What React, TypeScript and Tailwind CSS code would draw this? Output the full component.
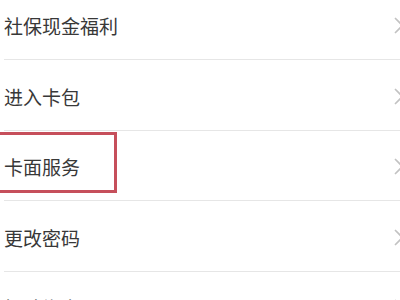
import React from "react";

const items = ["社保现金福利", "进入卡包", "卡面服务", "更改密码", "解除绑定"];

function Chevron() {
  return (
    <svg width="10" height="17" viewBox="0 0 10 17" className="-mr-[4px] shrink-0">
      <polyline points="1.5,1.5 8.5,8.5 1.5,15.5" fill="none" stroke="#c2c2c2" strokeWidth="1.7" strokeLinecap="round" strokeLinejoin="round" />
    </svg>
  );
}

export default function App() {
  return (
    <div className="relative w-[400px] h-[300px] overflow-hidden bg-white" style={{ fontFamily: '"Noto Sans CJK SC", "Noto Sans", sans-serif' }}>
      <div className="-mt-[10.5px] flex flex-col">
        {items.map((t) => (
          <div key={t} className="h-[70.5px] flex flex-col">
            <div className="flex-1 flex items-center justify-between pl-[4px] pt-[3px]">
              <span className="text-[19px] leading-none text-[#383838]">{t}</span>
              <Chevron />
            </div>
            <div className="ml-[4px] h-px bg-[#e6e6e6]" />
          </div>
        ))}
      </div>
      <div className="absolute left-[-3px] top-[132px] w-[120px] h-[61px] border-[3px] border-[#c64f5b]" />
    </div>
  );
}
